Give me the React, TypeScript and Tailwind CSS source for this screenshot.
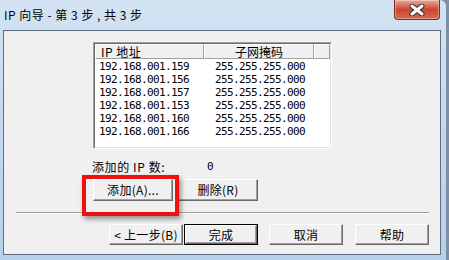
const rows = [
  ['192.168.001.159', '255.255.255.000'],
  ['192.168.001.156', '255.255.255.000'],
  ['192.168.001.157', '255.255.255.000'],
  ['192.168.001.153', '255.255.255.000'],
  ['192.168.001.160', '255.255.255.000'],
  ['192.168.001.166', '255.255.255.000'],
];

const cjk = "font-['Noto_Sans_CJK_SC',sans-serif]";
const mono = "font-['DejaVu_Sans_Mono','Noto_Sans_CJK_SC',monospace] text-[11px] tracking-[-0.62px]";

function Btn({ label, w, isDefault }: { label: string; w: string; isDefault?: boolean }) {
  return (
    <div className={`${w} h-full ${isDefault ? 'border border-black' : ''}`}>
      <div className="flex h-full items-center justify-center border border-t-white border-l-white border-r-[#696969] border-b-[#696969] bg-[#f0f0f0] text-[12px] leading-none tracking-[0.3px] text-black shadow-[inset_-1px_-1px_#a0a0a0]">
        {label}
      </div>
    </div>
  );
}

export default function App() {
  return (
    <div className={`relative h-[260px] w-[449px] overflow-hidden bg-[#7d8fa3] ${cjk}`}>
      <div className="h-[260px] w-[446px] rounded-tr-[6px] bg-gradient-to-b from-[#d3e3f3] via-[#c3d8ee] to-[#b7d0ea]">
        <div className="flex h-[30px] items-start justify-between">
          <div className="pl-[4px] pt-[6px] text-[12px] leading-[18px] tracking-[0.5px] text-black">IP 向导 - 第 3 步 , 共 3 步</div>
          <div className="mr-[6px] flex h-[20px] w-[46px] items-center justify-center rounded-b-[4px] border border-t-0 border-[#7a2a20] bg-gradient-to-b from-[#e9a99a] via-[#c9452f] to-[#d86a52] shadow-[inset_0_0_0_1px_rgba(255,255,255,0.35)]">
            <svg width="16" height="12" viewBox="0 0 16 12">
              <path d="M3 2 L13 10 M13 2 L3 10" stroke="#3a2a2a" strokeWidth="5" strokeLinecap="round" />
              <path d="M3 2 L13 10 M13 2 L3 10" stroke="#ffffff" strokeWidth="3" strokeLinecap="round" />
            </svg>
          </div>
        </div>

        <div className="relative ml-[3px] h-[225px] w-[438px] border border-[#5f6e80] bg-[#f0f0f0] text-black">
          <div className="ml-[89px] mt-[11px] h-[107px] w-[239px] border border-t-[#a0a0a0] border-l-[#a0a0a0] border-r-white border-b-white">
            <div className="h-full border border-t-[#696969] border-l-[#696969] border-r-[#e3e3e3] border-b-[#e3e3e3] bg-white">
              <div className="grid h-[15px] grid-cols-[109px_110px_1fr] text-[12px] leading-[13px]">
                <div className="border border-t-white border-l-white border-r-[#a0a0a0] border-b-[#a0a0a0] bg-[#f0f0f0] pl-[5px] tracking-[0.5px]">IP 地址</div>
                <div className="border border-t-white border-l-white border-r-[#a0a0a0] border-b-[#a0a0a0] bg-[#f0f0f0] text-center">子网掩码</div>
                <div className="border border-t-white border-l-white border-r-[#a0a0a0] border-b-[#a0a0a0] bg-[#f0f0f0]"></div>
              </div>
              <div className="pt-[1px]">
                {rows.map(([ip, mask]) => (
                  <div key={ip} className={`grid h-[13px] grid-cols-[109px_110px] leading-[13px] ${mono}`}>
                    <div className="pl-[4px]">{ip}</div>
                    <div className="pl-[11px]">{mask}</div>
                  </div>
                ))}
              </div>
            </div>
          </div>

          <div className="ml-[88px] mt-[10px] flex h-[16px] items-center text-[12px]">
            <span className="w-[115px] tracking-[0.6px]">添加的 IP 数:</span>
            <span className="font-['DejaVu_Sans_Mono',monospace] text-[11px]">0</span>
          </div>

          <div className="ml-[89px] mt-[4px] flex h-[22px] gap-[5px]">
            <Btn label="添加(A)..." w="w-[80px]" />
            <Btn label="删除(R)" w="w-[80px]" />
          </div>

          <div className="ml-[12px] mt-[11px] h-[2px] w-[413px] border-t border-b border-t-[#a0a0a0] border-b-white"></div>

          <div className="ml-[105px] mt-[10px] flex h-[21px]">
            <Btn label="< 上一步(B)" w="w-[74px]" />
            <div className="ml-[1px]">
              <Btn label="完成" w="w-[74px]" isDefault />
            </div>
            <div className="ml-[11px]">
              <Btn label="取消" w="w-[74px]" />
            </div>
            <div className="ml-[12px]">
              <Btn label="帮助" w="w-[74px]" />
            </div>
          </div>

          <div className="absolute left-[78px] top-[144px] h-[41px] w-[97px] border-4 border-[#f01010] shadow-[2px_3px_5px_rgba(0,0,0,0.4)]"></div>
        </div>
      </div>
    </div>
  );
}
